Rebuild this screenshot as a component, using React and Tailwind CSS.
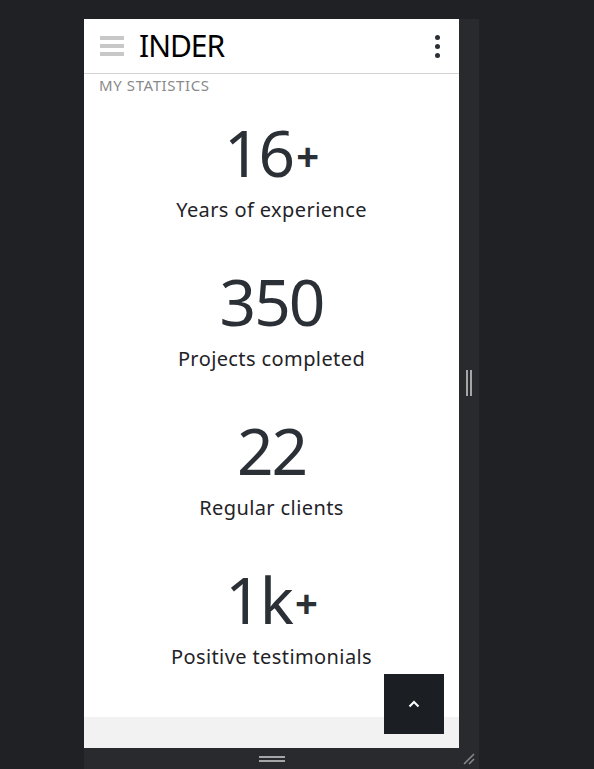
import React from "react";

const stats = [
  { n: "16", p: true, l: "Years of experience" },
  { n: "350", p: false, l: "Projects completed" },
  { n: "22", p: false, l: "Regular clients" },
  { n: "1k", p: true, l: "Positive testimonials" },
];

export default function App() {
  return (
    <div
      className="w-[594px] h-[769px] bg-[#202124] pl-[84px] pt-[19px] overflow-hidden"
      style={{ fontFamily: "'Noto Sans', 'Open Sans', sans-serif" }}
    >
      <div className="w-[395px] flex flex-col">
        <div className="flex h-[729px]">
          <div className="relative w-[375px] h-[729px] bg-white overflow-hidden flex flex-col">
            <header className="h-[55px] shrink-0 border-b border-[#d4d4d4] flex items-center pl-4 pr-[19px]">
              <div className="flex flex-col gap-[4px] w-6">
                <span className="block h-[4px] bg-[#c8c8c8]" />
                <span className="block h-[4px] bg-[#c8c8c8]" />
                <span className="block h-[4px] bg-[#c8c8c8]" />
              </div>
              <div className="ml-[15px] text-[30px] leading-none text-black tracking-[-1px]">INDER</div>
              <div className="ml-auto flex flex-col gap-[4px] items-center">
                <span className="block w-[5px] h-[5px] rounded-full bg-[#2b3036]" />
                <span className="block w-[5px] h-[5px] rounded-full bg-[#2b3036]" />
                <span className="block w-[5px] h-[5px] rounded-full bg-[#2b3036]" />
              </div>
            </header>
            <div className="pl-[15px] mt-[1px] text-[15px] leading-[20px] text-[#8a8a8a] uppercase tracking-[0.6px]">
              My statistics
            </div>
            <div className="flex flex-col items-center mt-[26px] gap-[46px]">
              {stats.map((s) => (
                <div key={s.n} className="flex flex-col items-center gap-[11px]">
                  <div className="flex items-center text-[64px] leading-[64px] text-[#2b3036] tracking-[-2px]">
                    <span>{s.n}</span>
                    {s.p && (
                      <span className="text-[40px] leading-[40px] font-bold ml-[3px] mt-[6px] tracking-normal">+</span>
                    )}
                  </div>
                  <div className="text-[20px] leading-[28px] text-[#1f2328] tracking-[0.4px]">{s.l}</div>
                </div>
              ))}
            </div>
            <div className="mt-auto h-[31px] bg-[#f2f2f2]" />
            <button className="absolute right-[15px] bottom-[14px] w-[60px] h-[60px] bg-[#1b1f23] flex items-center justify-center">
              <svg width="12" height="8" viewBox="0 0 12 8">
                <path d="M1.5 6.5 L6 2 L10.5 6.5" fill="none" stroke="white" strokeWidth="2" />
              </svg>
            </button>
          </div>
          <div className="w-[20px] h-[729px] bg-[#292a2d] flex items-center justify-center">
            <div className="flex gap-[2px] mt-[-2px]">
              <span className="block w-[2px] h-[26px] bg-[#a6a6a6]" />
              <span className="block w-[2px] h-[26px] bg-[#a6a6a6]" />
            </div>
          </div>
        </div>
        <div className="relative h-[21px] bg-[#292a2d] flex flex-col items-center justify-center gap-[2px] pr-[20px]">
          <span className="block w-[26px] h-[2px] bg-[#a6a6a6]" />
          <span className="block w-[26px] h-[2px] bg-[#a6a6a6]" />
          <svg className="absolute right-[4px] bottom-[4px]" width="12" height="12" viewBox="0 0 12 12">
            <path d="M1 11 L11 1 M6 11 L11 6" stroke="#8a8a8a" strokeWidth="1.5" />
          </svg>
        </div>
      </div>
    </div>
  );
}
